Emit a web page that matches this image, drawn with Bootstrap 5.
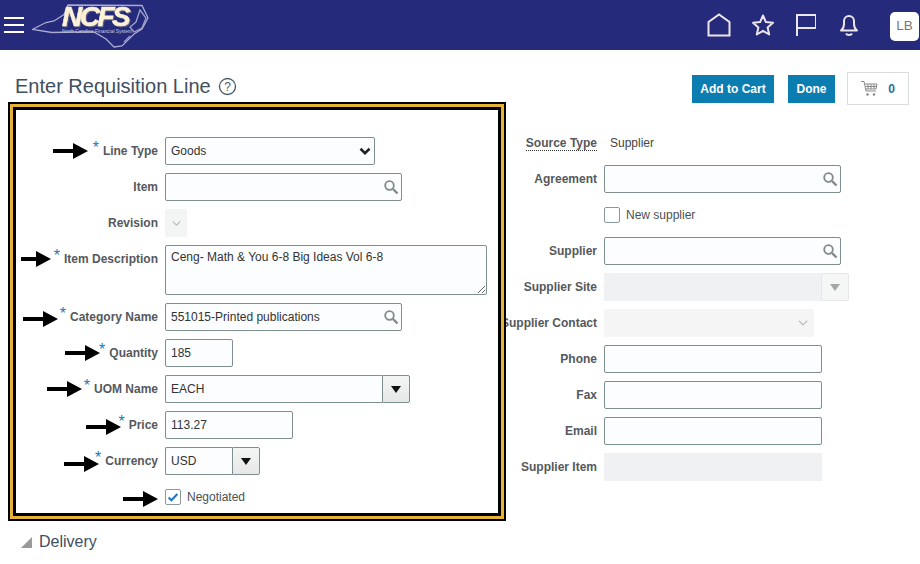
<!doctype html>
<html lang="en"><head><meta charset="utf-8"><title>Enter Requisition Line</title>
<link href="https://cdn.jsdelivr.net/npm/bootstrap@5.3.0/dist/css/bootstrap.min.css" rel="stylesheet">
<style>
html,body{height:100%;overflow:hidden}
body{font-family:"Liberation Sans",Arial,sans-serif;font-size:12px;color:#333;background:#fff}
.topbar{height:50px;background:#252a7b;padding:0 1px 0 4px}
.burger{display:flex;flex-direction:column;gap:5px;width:20px;margin-top:0}
.burger span{display:block;height:2px;background:#fff}
.logo{margin-left:8px;display:block}
.ncfs{filter:drop-shadow(1px 1px 0 #5f6088)}
.hi-home{margin-right:20px}.hi-star{margin-right:21px}.hi-flag{margin-right:24px}.hi-bell{margin-right:32px}
.avatar{width:29px;height:29px;background:#fff;border-radius:5px;color:#777;font-size:13.500px;display:flex;align-items:center;justify-content:center;margin-top:3px}
.titlebar{height:52px;padding:22px 11px 0 15px;align-items:flex-start}
.ttl{font-size:20px;font-weight:400;color:#3f4f5f;margin:0;line-height:24px;padding-top:2px}
.ttl svg{margin-left:2px;vertical-align:-3px}
.act-wrap{padding-top:3px}
.act{background:#0b7db1;color:#fff;border:0;border-radius:0;font-size:12px;font-weight:700;height:28px;padding:0;line-height:28px}
.act:hover{background:#0b7db1;color:#fff}
.a-add{width:82px}
.a-done{margin-left:14px;width:47px}
.cartbox{margin-left:12px;width:62px;height:33px;border:1px solid #d9dddd;color:#1c6f9f;font-weight:700;gap:10px;margin-top:-3px}
.panes{align-items:flex-start}
.frame{position:relative;z-index:1;margin-left:8px;width:498px;height:419px;background:#fff;border:2px solid #000;box-shadow:inset 0 0 0 3px #e5b136,inset 0 0 0 6px #000;padding-top:33px;flex:none}
.frow{display:flex;gap:7px;align-items:center;min-height:28px;margin-bottom:8px}
.lab{width:148px;flex:none;display:flex;justify-content:flex-end;align-items:center;font-weight:700;color:#55585c;white-space:nowrap;line-height:28px}
.side{padding-top:27px;flex:none}
.side .lab{width:91px}
.req{color:#1a7ab3;font-weight:400;font-size:16px;line-height:14px;align-self:flex-start;margin:4px 4px 0 0}
.arw{display:block;flex:none}
.m-line{margin-right:5px}
.m-desc{margin-right:3px}
.m-cat{margin-right:2px}
.m-qty{margin-right:-1px}
.m-uom{margin-right:2px}
.m-price{margin-right:-3px}
.m-cur{margin-right:-4px}
.m-neg{margin-right:0}
.a-low{margin-top:3px}
.a-lower{margin-top:5px}
.fld{height:28px;font-size:12px;color:#333;background-color:#fbfdfe;border:1px solid #7d8f8f;border-radius:2px;padding:0 5px;box-shadow:none}
.form-select.fld{padding-right:20px;background-position:right 3px center;background-size:12px 12px}
.form-select.boldsel{background-image:url("data:image/svg+xml,%3csvg xmlns='http://www.w3.org/2000/svg' viewBox='0 0 16 16'%3e%3cpath fill='none' stroke='%23222' stroke-width='3.400' d='m2 5 6 6 6-6'/%3e%3c/svg%3e")}
.w-goods{width:210px}.w-q{width:68px}.w-p{width:128px}.w-ph{width:218px}
.srch{position:relative;width:237px}
.srch .fld{width:100%}
.srch svg{position:absolute;right:3px;top:6px}
.form-select.dimsel{background-image:url("data:image/svg+xml,%3csvg xmlns='http://www.w3.org/2000/svg' viewBox='0 0 16 16'%3e%3cpath fill='none' stroke='%23b4b9b9' stroke-linecap='round' stroke-linejoin='round' stroke-width='2' d='m2 5 6 6 6-6'/%3e%3c/svg%3e")}
.form-select.w-rev{width:22px;padding:0;background-color:#f3f4f4;border:0;background-position:center;background-size:11px 9px}
.ta{width:322px;height:50px;padding:3px 5px;line-height:16px;resize:both;min-height:50px}
.ta-row{align-items:flex-start}
.combo{display:flex;height:28px}
.combo .fld{border-radius:2px 0 0 2px;flex:1;min-width:0;border-right:0}
.cbtn{width:28px;flex:none;background:linear-gradient(#f4f5f5,#e6e8e8);border:1px solid #7d8f8f;border-radius:0 2px 2px 0;display:flex;align-items:center;justify-content:center;padding:0}
.w-uom{width:245px}.w-cur{width:95px}.w-site{width:245px}
.dis{background:#f0f1f2;height:28px;border:0}
.cbtn-d{background:#f5f6f6;border:1px solid #e6e8e8}
.form-select.w-con{width:210px;background-color:#f5f5f5;border:0;background-position:right 5px center;background-size:12px 10px}
.ck{width:16px;height:16px;border:1px solid #8a9a9a;border-radius:2px;background-color:#fff;margin:0;flex:none;box-shadow:none}
.cklab{margin-left:6px;color:#4b5055}
.ckwrap{display:flex;align-items:center}
.val{color:#444;padding-left:6px}
.dotted{border-bottom:1px dotted #333;line-height:14px}
.deliv{margin:11px 0 0 21px;font-size:16px;color:#3f4f5f;gap:7px;line-height:20px}
</style></head>
<body>
<nav class="navbar topbar d-flex align-items-center flex-nowrap">
  <div class="d-flex align-items-center">
    <div class="burger"><span></span><span></span><span></span></div>
    <svg class="logo" width="120" height="46" viewBox="0 0 120 46">
      <path d="M0.500 27.500L6 24.500 14 20.500 22 19 32 12.500 36 3 110 3.500 116 16 110 27 102 32 90 44 82 45 74 37 62 30 44 30 20 30.500Z" fill="none" stroke="#a9acd0" stroke-width="1.300"/>
      <path d="M108 8l6 8-4 10-8 4-4-5 6-5zM98 34l-6 6" fill="none" stroke="#9ea2c8" stroke-width="1.300"/>
      <text class="ncfs" x="30" y="24" font-family="Liberation Sans" font-weight="700" font-style="italic" font-size="28" letter-spacing="-2.500" stroke="#fdf2d6" stroke-width=".6" fill="#fdf2d6">NCFS</text>
      <text x="30" y="31" font-family="Liberation Sans" font-size="4.900" fill="#c9cbe0">North Carolina Financial System</text>
    </svg>
  </div>
  <div class="d-flex align-items-center">
    <svg class="hi-home" width="24" height="24" viewBox="0 0 24 24"><path d="M1.500 22.500V9L12 1.500 22.500 9V22.500Z" fill="none" stroke="#ece6ea" stroke-width="2"/></svg>
    <svg class="hi-star" width="24" height="24" viewBox="0 0 24 24"><path d="M12 2.500l2.900 6.600 7.100.7-5.400 4.700 1.600 7-6.200-3.700-6.200 3.700 1.600-7L2 9.800l7.100-.7z" fill="none" stroke="#ece6ea" stroke-width="2" stroke-linejoin="round"/></svg>
    <svg class="hi-flag" width="20" height="24" viewBox="0 0 20 24"><path d="M1 23V2H20V15H1" fill="none" stroke="#ece6ea" stroke-width="2"/></svg>
    <svg class="hi-bell" width="18" height="24" viewBox="0 0 18 24"><path d="M1 17.500c2-1.500 3-3 3-6.500V8a5 5 0 0 1 10 0v3c0 3.500 1 5 3 6.500zM6 20.500c1 2 5 2 6 0" fill="none" stroke="#ece6ea" stroke-width="2" stroke-linejoin="round"/></svg>
    <div class="avatar">LB</div>
  </div>
</nav>
<div class="titlebar d-flex justify-content-between">
  <h1 class="ttl">Enter Requisition Line <svg width="19" height="19" viewBox="0 0 19 19"><circle cx="9.500" cy="9.500" r="8" fill="none" stroke="#4a5a68" stroke-width="1.300"/><text x="9.500" y="14" text-anchor="middle" font-family="Liberation Sans" font-size="12" fill="#4a5a68">?</text></svg></h1>
  <div class="d-flex align-items-start act-wrap">
    <button class="btn act a-add" type="button">Add to Cart</button>
    <button class="btn act a-done" type="button">Done</button>
    <div class="cartbox d-flex align-items-center justify-content-center">
      <svg width="17" height="17" viewBox="0 0 17 17"><path d="M0 1.500h3l2 9.500h10M4 4h12l-1 5H5M7 4v5M10 4v5M13 4v5M4.500 6.500h11" fill="none" stroke="#8a8a8a"/><circle cx="6.500" cy="14.500" r="1.300" fill="#8a8a8a"/><circle cx="13" cy="14.500" r="1.300" fill="#8a8a8a"/></svg>
      <span>0</span>
    </div>
  </div>
</div>
<div class="d-flex panes">
  <div class="frame">
    <div class="frow"><div class="lab"><svg class="arw m-line" width="35" height="16" viewBox="0 0 35 16"><path d="M0 6H20V0L35 8 20 16V10H0Z"/></svg><span class="req">*</span>Line Type</div>
      <select class="form-select fld boldsel w-goods"><option>Goods</option></select></div>
    <div class="frow"><div class="lab">Item</div>
      <div class="srch"><input class="form-control fld" type="text" aria-label="Item"><svg width="16" height="16" viewBox="0 0 16 16"><circle cx="6.500" cy="6.500" r="4.300" fill="none" stroke="#808a8a" stroke-width="1.800"/><path d="M10 10l4.500 4.500" stroke="#808a8a" stroke-width="2.400"/></svg></div></div>
    <div class="frow"><div class="lab">Revision</div>
      <select class="form-select fld dimsel w-rev" disabled aria-label="Revision"><option></option></select></div>
    <div class="frow ta-row"><div class="lab"><svg class="arw m-desc" width="30" height="16" viewBox="0 0 30 16"><path d="M0 6H15V0L30 8 15 16V10H0Z"/></svg><span class="req">*</span>Item Description</div>
      <textarea class="form-control fld ta" aria-label="Item Description">Ceng- Math &amp; You 6-8 Big Ideas Vol 6-8</textarea></div>
    <div class="frow"><div class="lab"><svg class="arw a-low m-cat" width="35" height="16" viewBox="0 0 35 16"><path d="M0 6H20V0L35 8 20 16V10H0Z"/></svg><span class="req">*</span>Category Name</div>
      <div class="srch"><input class="form-control fld" type="text" value="551015-Printed publications" aria-label="Category Name"><svg width="16" height="16" viewBox="0 0 16 16"><circle cx="6.500" cy="6.500" r="4.300" fill="none" stroke="#808a8a" stroke-width="1.800"/><path d="M10 10l4.500 4.500" stroke="#808a8a" stroke-width="2.400"/></svg></div></div>
    <div class="frow"><div class="lab"><svg class="arw m-qty" width="35" height="16" viewBox="0 0 35 16"><path d="M0 6H20V0L35 8 20 16V10H0Z"/></svg><span class="req">*</span>Quantity</div>
      <input class="form-control fld w-q" type="text" value="185" aria-label="Quantity"></div>
    <div class="frow"><div class="lab"><svg class="arw m-uom" width="35" height="16" viewBox="0 0 35 16"><path d="M0 6H20V0L35 8 20 16V10H0Z"/></svg><span class="req">*</span>UOM Name</div>
      <div class="combo w-uom"><input class="form-control fld" type="text" value="EACH" aria-label="UOM Name"><button class="cbtn" type="button" aria-label="UOM"><svg width="10" height="7" viewBox="0 0 10 7"><path d="M0 0H10L5 7Z" fill="#111"/></svg></button></div></div>
    <div class="frow"><div class="lab"><svg class="arw a-low m-price" width="35" height="16" viewBox="0 0 35 16"><path d="M0 6H20V0L35 8 20 16V10H0Z"/></svg><span class="req">*</span>Price</div>
      <input class="form-control fld w-p" type="text" value="113.27" aria-label="Price"></div>
    <div class="frow"><div class="lab"><svg class="arw a-lower m-cur" width="35" height="16" viewBox="0 0 35 16"><path d="M0 6H20V0L35 8 20 16V10H0Z"/></svg><span class="req">*</span>Currency</div>
      <div class="combo w-cur"><input class="form-control fld" type="text" value="USD" aria-label="Currency"><button class="cbtn" type="button" aria-label="Currency list"><svg width="10" height="7" viewBox="0 0 10 7"><path d="M0 0H10L5 7Z" fill="#111"/></svg></button></div></div>
    <div class="frow"><div class="lab"><svg class="arw a-low m-neg" width="35" height="16" viewBox="0 0 35 16"><path d="M0 6H20V0L35 8 20 16V10H0Z"/></svg></div>
      <div class="ckwrap"><svg class="ck" viewBox="0 0 16 16"><path d="M3 8.500l3.200 3.200L13 4.500" fill="none" stroke="#1b78c8" stroke-width="2.400"/></svg><span class="cklab">Negotiated</span></div></div>
  </div>
  <div class="side">
    <div class="frow"><div class="lab"><span class="dotted">Source Type</span></div><span class="val">Supplier</span></div>
    <div class="frow"><div class="lab">Agreement</div>
      <div class="srch"><input class="form-control fld" type="text" aria-label="Agreement"><svg width="16" height="16" viewBox="0 0 16 16"><circle cx="6.500" cy="6.500" r="4.300" fill="none" stroke="#808a8a" stroke-width="1.800"/><path d="M10 10l4.500 4.500" stroke="#808a8a" stroke-width="2.400"/></svg></div></div>
    <div class="frow"><div class="lab"></div><div class="ckwrap"><span class="ck"></span><span class="cklab">New supplier</span></div></div>
    <div class="frow"><div class="lab">Supplier</div>
      <div class="srch"><input class="form-control fld" type="text" aria-label="Supplier"><svg width="16" height="16" viewBox="0 0 16 16"><circle cx="6.500" cy="6.500" r="4.300" fill="none" stroke="#808a8a" stroke-width="1.800"/><path d="M10 10l4.500 4.500" stroke="#808a8a" stroke-width="2.400"/></svg></div></div>
    <div class="frow"><div class="lab">Supplier Site</div>
      <div class="combo w-site"><div class="dis flex-grow-1"></div><div class="cbtn cbtn-d"><svg width="10" height="7" viewBox="0 0 10 7"><path d="M0 0H10L5 7Z" fill="#a3a8a8"/></svg></div></div></div>
    <div class="frow"><div class="lab">Supplier Contact</div>
      <select class="form-select fld dimsel w-con" disabled aria-label="Supplier Contact"><option></option></select></div>
    <div class="frow"><div class="lab">Phone</div><input class="form-control fld w-ph" type="text" aria-label="Phone"></div>
    <div class="frow"><div class="lab">Fax</div><input class="form-control fld w-ph" type="text" aria-label="Fax"></div>
    <div class="frow"><div class="lab">Email</div><input class="form-control fld w-ph" type="text" aria-label="Email"></div>
    <div class="frow"><div class="lab">Supplier Item</div><div class="dis w-ph"></div></div>
  </div>
</div>
<div class="deliv d-flex align-items-center"><svg width="11" height="11" viewBox="0 0 11 11"><path d="M11 0V11H0Z" fill="#9a9a9a"/></svg>Delivery</div>
</body></html>
